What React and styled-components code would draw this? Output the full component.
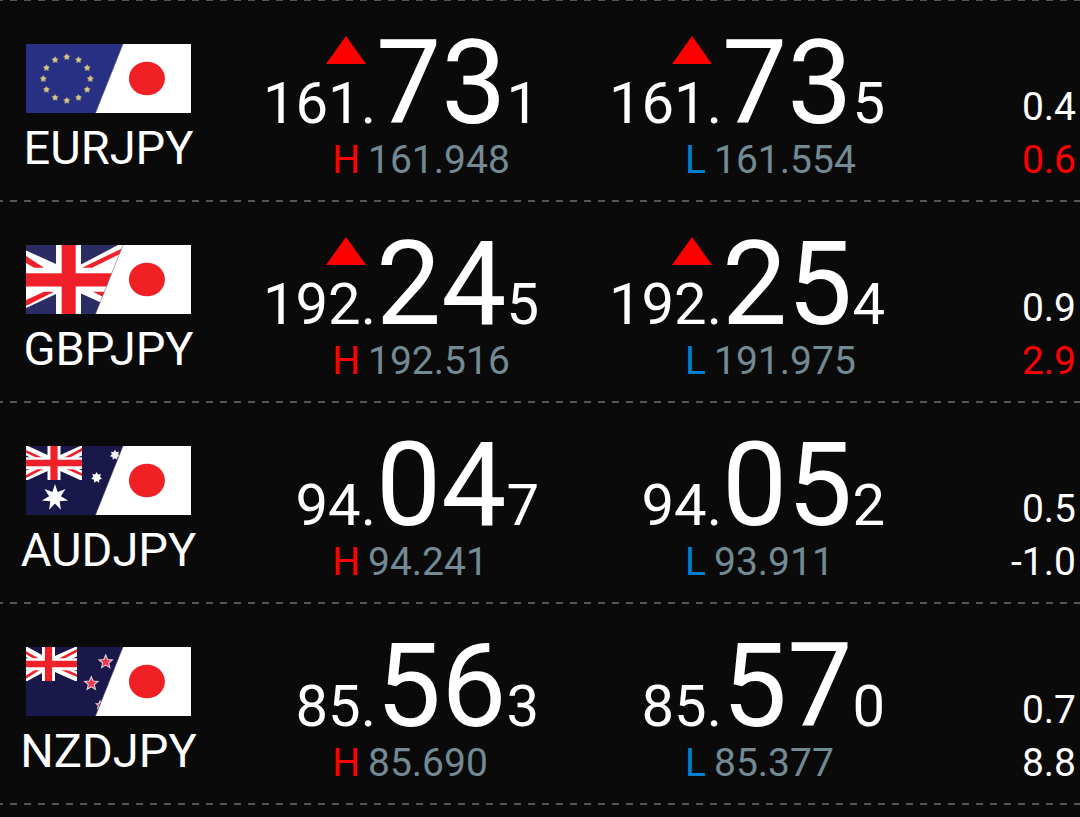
import React, { useId } from "react";
import styled, { createGlobalStyle } from "styled-components";

const GlobalStyle = createGlobalStyle`
  * {
    box-sizing: border-box;
  }

  body {
    margin: 0;
    background: #0a0a0a;
    color: #fff;
    font-family: Roboto, sans-serif;
  }
`;

const Board = styled.main`
  width: 100%;
`;

const Divider = styled.div`
  height: ${(props) => (props.$thin ? 1 : 2)}px;
  background: repeating-linear-gradient(
    to right,
    #555 0 7px,
    transparent 7px 14px
  );
  background-position-x: -4px;
`;

const Row = styled.section`
  display: grid;
  grid-template-columns: 217fr 347fr 346fr 170fr;
  align-items: start;
  padding: 32px 0 13px;
`;

const Pair = styled.div`
  display: flex;
  flex-direction: column;
  align-items: center;
  gap: 8px;
  padding-top: 11px;
`;

const Flag = styled.svg`
  display: block;
  width: 165px;
  height: 69px;
`;

const PairName = styled.h2`
  margin: 0;
  font-size: 47px;
  font-weight: 400;
  line-height: 54px;
`;

const Quote = styled.div`
  display: flex;
  flex-direction: column;
  align-items: flex-end;
  gap: 4px;
  padding-right: 25px;
`;

const Price = styled.div`
  display: flex;
  align-items: flex-end;
  white-space: nowrap;
`;

const Handle = styled.div`
  display: flex;
  flex-direction: column;
  align-items: flex-end;
  gap: 9px;
`;

const UpMark = styled.svg`
  display: block;
  width: 40px;
  height: 28px;
  margin-right: 10px;
`;

const SmallDigits = styled.span`
  font-size: 58px;
  line-height: 60px;
`;

const BigDigits = styled.span`
  font-size: 116px;
  line-height: 100px;
`;

const Extreme = styled.div`
  display: flex;
  gap: 8px;
  font-size: 39px;
  line-height: 46px;
`;

const ExtremeLabel = styled.span`
  color: ${(props) => props.$color};
`;

const ExtremeValue = styled.span`
  width: 171px;
  color: #738a94;
`;

const Figures = styled.div`
  padding: 48px 4px 0 0;
  font-size: 39px;
  line-height: 53px;
  text-align: right;
`;

const Figure = styled.div`
  color: ${(props) => (props.$hot ? "#f00" : "#fff")};
`;

const RED = "#f0202a";
const NAVY = "#1a184a";

const starPoints = (cx, cy, outer, inner, count) =>
  Array.from({ length: count * 2 }, (_, i) => {
    const r = i % 2 ? inner : outer;
    const a = (Math.PI * i) / count - Math.PI / 2;
    return `${(cx + r * Math.cos(a)).toFixed(2)},${(cy + r * Math.sin(a)).toFixed(2)}`;
  }).join(" ");

const Star = ({ x, y, r, inner = r * 0.45, count = 5, ...rest }) => (
  <polygon points={starPoints(x, y, r, inner, count)} {...rest} />
);

const Europe = () => (
  <>
    <rect width="98" height="69" fill="#283084" />
    {Array.from({ length: 12 }, (_, i) => {
      const a = (Math.PI * i) / 6;
      return (
        <Star
          key={i}
          x={40.8 + 23.5 * Math.sin(a)}
          y={34.8 - 21.8 * Math.cos(a)}
          r={3.5}
          inner={2.1}
          fill="#d6c88a"
          stroke="#6f6a70"
          strokeWidth="0.6"
        />
      );
    })}
  </>
);

const Britain = () => (
  <>
    <rect width="98" height="69" fill="#fff" />
    <g fill="#2b2b66">
      <polygon points="0,0 30,0 30,19 0,5.5" />
      <polygon points="55,0 92,0 55,19.5" />
      <polygon points="0,63 30,49 30,69 0,69" />
      <polygon points="55,48.5 76,58 76,69 55,69" />
    </g>
    <g fill={RED}>
      <polygon points="0,11 18,22.7 8,22.7 0,18" />
      <polygon points="56,22.7 66,22.7 93,9.5 98,2.5" />
      <polygon points="0,55 18,46.7 28,46.7 0,61" />
      <polygon points="67,46.7 79,46.7 79,53" />
      <rect x="35.7" width="14" height="69" />
      <rect y="28.3" width="98" height="13.2" />
    </g>
  </>
);

const Canton = ({ width }) => {
  const cx = width / 2 - (width > 52 ? 0 : 3);
  return (
    <svg width={width} height="34" viewBox={`0 0 ${width} 34`}>
      <g fill="none" stroke="#fff" strokeWidth="9.5">
        <path d={`M-3 3L${cx} 17L${width + 3} 3`} />
        <path d={`M-3 31L${cx} 17L${width + 3} 31`} />
      </g>
      <g fill="none" stroke={RED} strokeWidth="2.6">
        <path d={`M-3 4L${cx} 18.5L${width + 3} 2`} />
        <path d={`M-3 32L${cx} 16L${width + 3} 30`} />
      </g>
      <path
        d={`M${cx - 6.5} 0h13v11.3H${width}v12H${cx + 6.5}V34h-13V23.3H0v-12h${cx - 6.5}z`}
        fill="#fff"
      />
      <path
        d={`M${cx - 3.6} 0h7.2v13.7H${width}v6.6H${cx + 3.6}V34h-7.2V20.3H0v-6.6h${cx - 3.6}z`}
        fill={RED}
      />
    </svg>
  );
};

const Australia = () => (
  <>
    <rect width="98" height="69" fill={NAVY} />
    <Canton width={56} />
    <Star x={29} y={51.5} r={13.5} inner={6} count={7} fill="#fff" />
    <Star x={70.6} y={31.6} r={5.6} inner={3.4} count={7} fill="#fff" />
    <Star x={89} y={9} r={5.2} inner={3.2} count={7} fill="#eee" />
  </>
);

const NewZealand = () => (
  <>
    <rect width="98" height="69" fill={NAVY} />
    <Canton width={51} />
    <g fill="#ee3850" stroke="#e0d0d8" strokeWidth="1.1">
      <Star x={79.7} y={15} r={7} />
      <Star x={65.3} y={36.6} r={7} />
      <Star x={74} y={58} r={4} />
    </g>
  </>
);

const PairFlag = ({ label, children }) => {
  const clip = useId();
  return (
    <Flag viewBox="0 0 165 69" role="img" aria-label={label}>
      <clipPath id={clip}>
        <polygon points="0,0 97,0 69.5,69 0,69" />
      </clipPath>
      <rect width="165" height="69" fill="#fff" />
      <g clipPath={`url(#${clip})`}>{children}</g>
      <path d="M97 0L69.5 69" stroke="#55505a" strokeOpacity="0.5" />
      <ellipse cx="120.9" cy="34.5" rx="18" ry="16.8" fill="#f02024" />
    </Flag>
  );
};

const pairs = [
  {
    name: "EURJPY",
    flag: <Europe />,
    bid: ["161.", "73", "1"],
    ask: ["161.", "73", "5"],
    up: true,
    high: "161.948",
    low: "161.554",
    spread: "0.4",
    change: "0.6",
    hot: true,
  },
  {
    name: "GBPJPY",
    flag: <Britain />,
    bid: ["192.", "24", "5"],
    ask: ["192.", "25", "4"],
    up: true,
    high: "192.516",
    low: "191.975",
    spread: "0.9",
    change: "2.9",
    hot: true,
  },
  {
    name: "AUDJPY",
    flag: <Australia />,
    bid: ["94.", "04", "7"],
    ask: ["94.", "05", "2"],
    high: "94.241",
    low: "93.911",
    spread: "0.5",
    change: "-1.0",
  },
  {
    name: "NZDJPY",
    flag: <NewZealand />,
    bid: ["85.", "56", "3"],
    ask: ["85.", "57", "0"],
    high: "85.690",
    low: "85.377",
    spread: "0.7",
    change: "8.8",
  },
];

const QuoteCell = ({ price, up, label, color, extreme }) => {
  const [handle, big, pip] = price;
  return (
    <Quote>
      <Price>
        <Handle>
          {up && (
            <UpMark viewBox="0 0 40 28" aria-hidden="true">
              <path d="M20 0L40 28H0z" fill="#f00" />
            </UpMark>
          )}
          <SmallDigits>{handle}</SmallDigits>
        </Handle>
        <BigDigits>{big}</BigDigits>
        <SmallDigits>{pip}</SmallDigits>
      </Price>
      <Extreme>
        <ExtremeLabel $color={color}>{label}</ExtremeLabel>
        <ExtremeValue>{extreme}</ExtremeValue>
      </Extreme>
    </Quote>
  );
};

const App = () => {
  return (
    <>
      <GlobalStyle />
      <Board>
        <Divider $thin />
        {pairs.map((pair) => (
          <React.Fragment key={pair.name}>
            <Row>
              <Pair>
                <PairFlag label={pair.name}>{pair.flag}</PairFlag>
                <PairName>{pair.name}</PairName>
              </Pair>
              <QuoteCell
                price={pair.bid}
                up={pair.up}
                label="H"
                color="#f00"
                extreme={pair.high}
              />
              <QuoteCell
                price={pair.ask}
                up={pair.up}
                label="L"
                color="#0080d0"
                extreme={pair.low}
              />
              <Figures>
                <Figure>{pair.spread}</Figure>
                <Figure $hot={pair.hot}>{pair.change}</Figure>
              </Figures>
            </Row>
            <Divider />
          </React.Fragment>
        ))}
      </Board>
    </>
  );
};

export default App;
